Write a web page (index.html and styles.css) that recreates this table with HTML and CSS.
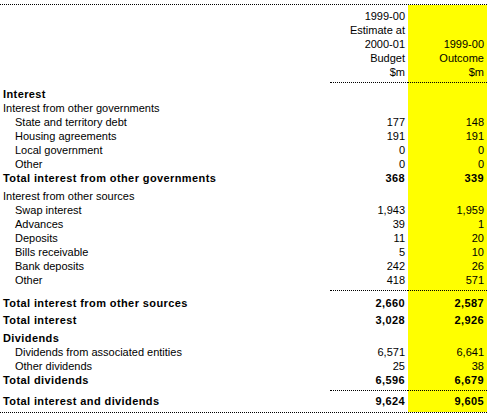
FILE: index.html
```html
<!DOCTYPE html>
<html>
<head>
<meta charset="utf-8">
<link rel="stylesheet" href="styles.css">
</head>
<body>
<div class="sheet">
  <div class="row head">
    <div class="lab"></div>
    <div class="num"><span>1999-00</span><span>Estimate at</span><span>2000-01</span><span>Budget</span><span>$m</span></div>
    <div class="num out"><span>1999-00</span><span>Outcome</span><span>$m</span></div>
  </div>

  <div class="row bold pt4"><div class="lab">Interest</div><div class="num"></div><div class="num out"></div></div>
  <div class="row"><div class="lab">Interest from other governments</div><div class="num"></div><div class="num out"></div></div>
  <div class="row"><div class="lab ind">State and territory debt</div><div class="num">177</div><div class="num out">148</div></div>
  <div class="row"><div class="lab ind">Housing agreements</div><div class="num">191</div><div class="num out">191</div></div>
  <div class="row"><div class="lab ind">Local government</div><div class="num">0</div><div class="num out">0</div></div>
  <div class="row"><div class="lab ind">Other</div><div class="num">0</div><div class="num out">0</div></div>
  <div class="row bold"><div class="lab">Total interest from other governments</div><div class="num">368</div><div class="num out">339</div></div>

  <div class="row pt4"><div class="lab">Interest from other sources</div><div class="num"></div><div class="num out"></div></div>
  <div class="row"><div class="lab ind">Swap interest</div><div class="num">1,943</div><div class="num out">1,959</div></div>
  <div class="row"><div class="lab ind">Advances</div><div class="num">39</div><div class="num out">1</div></div>
  <div class="row"><div class="lab ind">Deposits</div><div class="num">11</div><div class="num out">20</div></div>
  <div class="row"><div class="lab ind">Bills receivable</div><div class="num">5</div><div class="num out">10</div></div>
  <div class="row"><div class="lab ind">Bank deposits</div><div class="num">242</div><div class="num out">26</div></div>
  <div class="row rule"><div class="lab ind">Other</div><div class="num">418</div><div class="num out">571</div></div>

  <div class="row bold pt5"><div class="lab">Total interest from other sources</div><div class="num">2,660</div><div class="num out">2,587</div></div>
  <div class="row bold pt3"><div class="lab">Total interest</div><div class="num">3,028</div><div class="num out">2,926</div></div>

  <div class="row bold pt4"><div class="lab">Dividends</div><div class="num"></div><div class="num out"></div></div>
  <div class="row"><div class="lab ind">Dividends from associated entities</div><div class="num">6,571</div><div class="num out">6,641</div></div>
  <div class="row"><div class="lab ind">Other dividends</div><div class="num">25</div><div class="num out">38</div></div>
  <div class="row bold rule"><div class="lab">Total dividends</div><div class="num">6,596</div><div class="num out">6,679</div></div>

  <div class="row bold pt3 pb4"><div class="lab">Total interest and dividends</div><div class="num">9,624</div><div class="num out">9,605</div></div>
</div>
</body>
</html>
```

FILE: styles.css
```css
html, body {
  margin: 0;
  padding: 0;
  background: #ffffff;
}

body {
  font-family: "Liberation Sans", Arial, sans-serif;
  font-size: 11px;
  line-height: 14px;
  color: #000000;
}

.sheet {
  width: 487px;
  margin-top: 4px;
  border-top: 1px dotted #000000;
  border-bottom: 1px dotted #000000;
}

.row {
  display: grid;
  grid-template-columns: 330px 78px 79px;
}

.row > div {
  box-sizing: border-box;
  min-height: 14px;
}

.lab {
  padding-left: 3px;
  white-space: nowrap;
}

.lab.ind {
  padding-left: 15px;
}

.num {
  padding-right: 3px;
  text-align: right;
}

.out {
  background: #ffff00;
}

.head > div {
  padding-top: 4px;
  padding-bottom: 3px;
}

.head .num {
  display: flex;
  flex-direction: column;
  justify-content: flex-end;
  align-items: flex-end;
  border-bottom: 1px dotted #000000;
}

.bold {
  font-weight: bold;
  letter-spacing: 0.4px;
}

.pt3 > div { padding-top: 3px; }
.pt4 > div { padding-top: 4px; }
.pt5 > div { padding-top: 5px; }
.pb4 > div { padding-bottom: 4px; }

.rule > div {
  padding-bottom: 3px;
}

.rule > .num {
  border-bottom: 1px dotted #000000;
}
```
